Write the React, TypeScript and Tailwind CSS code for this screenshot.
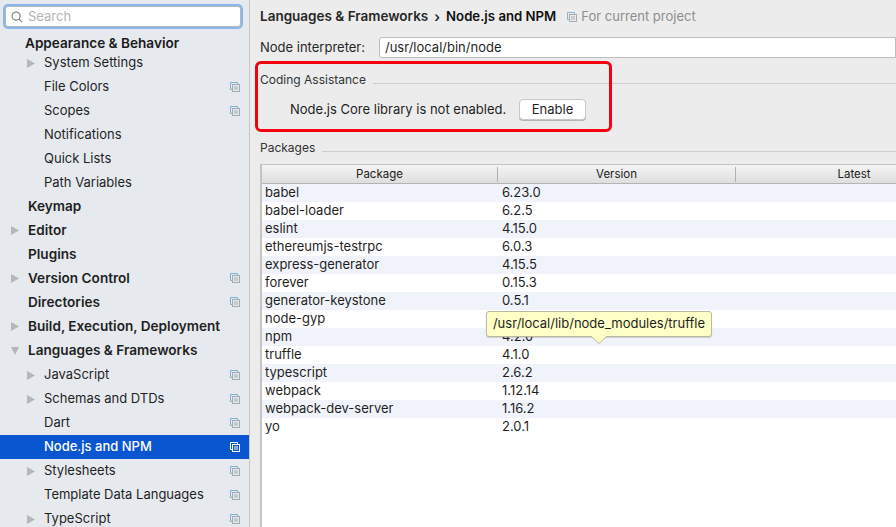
const font = "font-['Inter','Liberation_Sans',sans-serif]";

type NavItem = {
  label: string;
  level: 0 | 1;
  arrow?: "right" | "down";
  scoped?: boolean;
  selected?: boolean;
};

const navItems: NavItem[] = [
  { label: "System Settings", level: 1, arrow: "right" },
  { label: "File Colors", level: 1, scoped: true },
  { label: "Scopes", level: 1, scoped: true },
  { label: "Notifications", level: 1 },
  { label: "Quick Lists", level: 1 },
  { label: "Path Variables", level: 1 },
  { label: "Keymap", level: 0 },
  { label: "Editor", level: 0, arrow: "right" },
  { label: "Plugins", level: 0 },
  { label: "Version Control", level: 0, arrow: "right", scoped: true },
  { label: "Directories", level: 0, scoped: true },
  { label: "Build, Execution, Deployment", level: 0, arrow: "right" },
  { label: "Languages & Frameworks", level: 0, arrow: "down" },
  { label: "JavaScript", level: 1, arrow: "right", scoped: true },
  { label: "Schemas and DTDs", level: 1, arrow: "right", scoped: true },
  { label: "Dart", level: 1, scoped: true },
  { label: "Node.js and NPM", level: 1, scoped: true, selected: true },
  { label: "Stylesheets", level: 1, arrow: "right", scoped: true },
  { label: "Template Data Languages", level: 1, scoped: true },
  { label: "TypeScript", level: 1, arrow: "right", scoped: true },
];

const packages = [
  ["babel", "6.23.0"],
  ["babel-loader", "6.2.5"],
  ["eslint", "4.15.0"],
  ["ethereumjs-testrpc", "6.0.3"],
  ["express-generator", "4.15.5"],
  ["forever", "0.15.3"],
  ["generator-keystone", "0.5.1"],
  ["node-gyp", ""],
  ["npm", "4.2.0"],
  ["truffle", "4.1.0"],
  ["typescript", "2.6.2"],
  ["webpack", "1.12.14"],
  ["webpack-dev-server", "1.16.2"],
  ["yo", "2.0.1"],
];

function ScopeIcon({ back, front, className }: { back: string; front: string; className?: string }) {
  return (
    <svg width="10" height="10" viewBox="0 0 10 10" fill="none" className={className}>
      <path d="M7.5 2 V0.5 H0.5 V7.5 H2" stroke={back} />
      <rect x="2.5" y="2.5" width="7" height="7" stroke={front} />
      <path d="M4 5 H8 M4 7 H8" stroke={front} />
    </svg>
  );
}

function Arrow({ dir }: { dir: "right" | "down" }) {
  return (
    <svg width="8" height="9" viewBox="0 0 8 9" className="text-[#b4b7ba]" fill="currentColor">
      {dir === "right" ? <path d="M0 0 L8 4.5 L0 9 Z" /> : <path d="M0 1 L8 1 L4 9 Z" />}
    </svg>
  );
}

function Sidebar() {
  return (
    <div className="flex h-full w-[250px] shrink-0 flex-col overflow-hidden border-r border-[#c4c6c8] bg-[#e6eaef]">
      <div className="mt-[6px] mr-[8px] ml-[5px] flex h-[21px] shrink-0 items-center gap-[5px] rounded-[3px] border border-[#b6b9bc] bg-white pl-[5px] shadow-[0_0_0_2px_#8ab6ec]">
        <svg width="12" height="12" viewBox="0 0 13 13" fill="none" stroke="#6f6f6f" strokeWidth="1.1">
          <circle cx="5.5" cy="5.5" r="4.4" />
          <path d="M8.7 8.7 L12.2 12.2" />
        </svg>
        <span className="text-[13px] text-[#b4b4b4]">Search</span>
      </div>
      <div className="h-[24px] shrink-0 pt-[8px] pl-[25px] text-[13.6px] leading-[16px] font-semibold whitespace-nowrap text-[#1b1b1b]">
        Appearance &amp; Behavior
      </div>
      {navItems.map((item) => (
        <div
          key={item.label}
          className={`flex h-6 shrink-0 items-center pr-[9px] text-[13px] ${
            item.selected ? "bg-[#0a55d0] font-medium text-white" : "text-[#1f1f1f]"
          } ${item.level === 0 ? "pb-[2px]" : ""}`}
        >
          <span className={`flex w-[44px] items-center ${item.level === 1 ? "pl-[27px]" : "pl-[11px]"}`}>
            {item.arrow && <Arrow dir={item.arrow} />}
          </span>
          <span
            className={`flex-1 whitespace-nowrap ${
              item.level === 0 ? "-ml-4 text-[13.6px] font-semibold" : ""
            }`}
          >
            {item.label}
          </span>
          {item.scoped &&
            (item.selected ? (
              <ScopeIcon back="#ffffff" front="#ffffff" />
            ) : (
              <ScopeIcon back="#7fb0d6" front="#a4abb0" />
            ))}
        </div>
      ))}
    </div>
  );
}

function GroupTitle({ title }: { title: string }) {
  return (
    <div className="flex items-center gap-[7px]">
      <span className="pt-px text-[12px] leading-[16px] whitespace-nowrap text-[#333]">{title}</span>
      <div className="mt-[7px] h-px flex-1 bg-[#cdcdcd]" />
    </div>
  );
}

function PackageTable() {
  return (
    <div className="mt-[8px] w-[712px] border-t border-l-2 border-[#c4c4c4]">
      <div className="flex h-[19px] border-b border-[#b4b4b4] bg-gradient-to-b from-[#f4f4f4] to-[#dedede] pt-px text-[11.5px] text-[#222]">
        <div className="flex w-[235px] items-center justify-center">Package</div>
        <div className="my-px w-px bg-[#b0b0b0]" />
        <div className="flex w-[237px] items-center justify-center">Version</div>
        <div className="my-px w-px bg-[#b0b0b0]" />
        <div className="flex flex-1 items-center justify-center">Latest</div>
      </div>
      {packages.map(([name, version], i) => (
        <div
          key={name}
          className={`flex h-[18px] items-center pl-[3px] text-[13px] text-[#1f1f1f] ${
            i % 2 === 0 ? "bg-[#f0f3f9]" : "bg-white"
          }`}
        >
          <span className="w-[237px]">{name}</span>
          <span>{version}</span>
        </div>
      ))}
      <div className="h-[100px] bg-white" />
    </div>
  );
}

function Main() {
  return (
    <div className="relative min-w-0 flex-1 overflow-hidden bg-[#ececec] pl-[10px]">
      <div className="flex h-[33px] items-center whitespace-nowrap">
        <span className="text-[13.5px] font-semibold text-[#262626]">Languages &amp; Frameworks</span>
        <span className="mx-[6px] text-[14px] font-semibold text-[#262626]">›</span>
        <span className="text-[13.2px] font-semibold text-[#111]">Node.js and NPM</span>
        <ScopeIcon back="#8db6d4" front="#a9a9a9" className="mr-[4px] ml-[11px]" />
        <span className="text-[13px] text-[#8e8e8e]">For current project</span>
      </div>
      <div className="mt-[4px] flex h-[21px] items-center">
        <span className="w-[119px] shrink-0 text-[13px] text-[#262626]">Node interpreter:</span>
        <div className="flex h-full flex-1 items-center rounded-l-[3px] border border-[#bdbdbd] bg-white pl-[5px] text-[13px] text-[#1f1f1f]">
          /usr/local/bin/node
        </div>
      </div>
      <div className="mt-[13px]">
        <GroupTitle title="Coding Assistance" />
      </div>
      <div className="mt-[11px] flex h-[21px] items-center pl-[30px]">
        <span className="w-[229px] pt-px text-[13px] whitespace-nowrap text-[#1f1f1f]">
          Node.js Core library is not enabled.
        </span>
        <div className="flex h-full w-[67px] items-center justify-center rounded-[4px] border border-[#c8c8c8] bg-white pt-px text-[13px] text-[#1f1f1f] shadow-[0_1px_0_#b5b5b5]">
          Enable
        </div>
      </div>
      <div className="mt-[19px]">
        <GroupTitle title="Packages" />
      </div>
      <PackageTable />

      <div className="absolute top-[61px] left-[5px] h-[71px] w-[357px] rounded-[6px] border-[3px] border-[#f5000f]" />

      <div className="absolute top-[311px] left-[236px] flex h-[26px] w-[226px] items-center justify-center rounded-[3px] border border-[#b9b9a0] bg-[#ffffc8] text-[13px] whitespace-nowrap text-[#1f1f1f] shadow-[0_1px_1px_rgba(0,0,0,0.15)]">
        /usr/local/lib/node_modules/truffle
      </div>
      <svg width="16" height="8" viewBox="0 0 16 8" className="absolute top-[336px] left-[341px]">
        <path d="M0 0 L8 7.5 L16 0 Z" fill="#ffffc8" />
        <path d="M0 0 L8 7.5 L16 0" fill="none" stroke="#b9b9a0" />
      </svg>
    </div>
  );
}

export default function App() {
  return (
    <div className={`flex h-[527px] w-[896px] overflow-hidden ${font}`}>
      <Sidebar />
      <Main />
    </div>
  );
}
